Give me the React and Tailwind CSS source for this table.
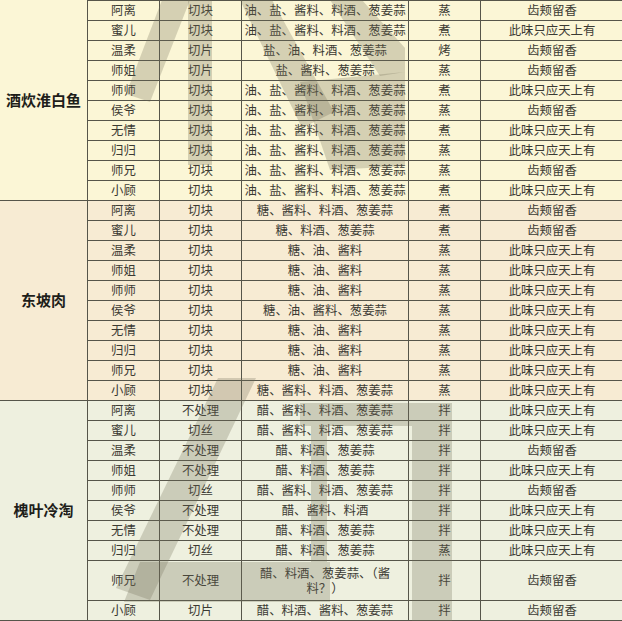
import React from "react";

const sections = [
  {
    name: "酒炊淮白鱼",
    bg: "bg-[#fbf6d6]",
    rows: [
      ["阿离", "切块", "油、盐、酱料、料酒、葱姜蒜", "蒸", "齿颊留香"],
      ["蜜儿", "切块", "油、盐、酱料、料酒、葱姜蒜", "煮", "此味只应天上有"],
      ["温柔", "切片", "盐、油、料酒、葱姜蒜", "烤", "齿颊留香"],
      ["师姐", "切片", "盐、酱料、葱姜蒜", "蒸", "齿颊留香"],
      ["师师", "切块", "油、盐、酱料、料酒、葱姜蒜", "煮", "此味只应天上有"],
      ["侯爷", "切块", "油、盐、酱料、料酒、葱姜蒜", "蒸", "齿颊留香"],
      ["无情", "切块", "油、盐、酱料、料酒、葱姜蒜", "煮", "此味只应天上有"],
      ["归归", "切块", "油、盐、酱料、料酒、葱姜蒜", "蒸", "此味只应天上有"],
      ["师兄", "切块", "油、盐、酱料、料酒、葱姜蒜", "蒸", "齿颊留香"],
      ["小顾", "切块", "油、盐、酱料、料酒、葱姜蒜", "煮", "此味只应天上有"],
    ],
  },
  {
    name: "东坡肉",
    bg: "bg-[#f7ebd3]",
    rows: [
      ["阿离", "切块", "糖、酱料、料酒、葱姜蒜", "煮", "齿颊留香"],
      ["蜜儿", "切块", "糖、料酒、葱姜蒜", "煮", "齿颊留香"],
      ["温柔", "切块", "糖、油、酱料", "蒸", "此味只应天上有"],
      ["师姐", "切块", "糖、油、酱料", "蒸", "此味只应天上有"],
      ["师师", "切块", "糖、油、酱料", "蒸", "此味只应天上有"],
      ["侯爷", "切块", "糖、油、酱料、葱姜蒜", "蒸", "此味只应天上有"],
      ["无情", "切块", "糖、油、酱料", "蒸", "此味只应天上有"],
      ["归归", "切块", "糖、油、酱料", "蒸", "此味只应天上有"],
      ["师兄", "切块", "糖、油、酱料", "蒸", "此味只应天上有"],
      ["小顾", "切块", "糖、酱料、料酒、葱姜蒜", "蒸", "此味只应天上有"],
    ],
  },
  {
    name: "槐叶冷淘",
    bg: "bg-[#eef0df]",
    rows: [
      ["阿离", "不处理", "醋、酱料、料酒、葱姜蒜", "拌", "此味只应天上有"],
      ["蜜儿", "切丝", "醋、酱料、料酒、葱姜蒜", "拌", "此味只应天上有"],
      ["温柔", "不处理", "醋、料酒、葱姜蒜", "拌", "齿颊留香"],
      ["师姐", "不处理", "醋、料酒、葱姜蒜", "拌", "此味只应天上有"],
      ["师师", "切丝", "醋、酱料、料酒、葱姜蒜", "拌", "齿颊留香"],
      ["侯爷", "不处理", "醋、酱料、料酒", "拌", "此味只应天上有"],
      ["无情", "不处理", "醋、料酒、葱姜蒜", "拌", "此味只应天上有"],
      ["归归", "切丝", "醋、料酒、葱姜蒜", "蒸", "此味只应天上有"],
      ["师兄", "不处理", "醋、料酒、葱姜蒜、（酱料？）", "拌", "齿颊留香", true],
      ["小顾", "切片", "醋、料酒、酱料、葱姜蒜", "拌", "齿颊留香"],
    ],
  },
];

const widths = ["w-[72px]", "w-[82px]", "w-[167px]", "w-[72px]", "w-[142px]"];

const Row = ({ row }) => (
  <div className={`flex border-b border-[#56554a] ${row[5] ? "h-[40px]" : "h-[20px]"}`}>
    {row.slice(0, 5).map((cell, i) => (
      <div
        key={i}
        className={`${widths[i]} shrink-0 flex items-center justify-center text-center leading-[15px] ${
          row[5] ? "px-[10px]" : "whitespace-nowrap"
        } ${i < 4 ? "border-r border-[#56554a]" : ""}`}
      >
        {cell}
      </div>
    ))}
  </div>
);

export default function App() {
  return (
    <div
      className="relative w-[622px] h-[621px] overflow-hidden bg-[#fbf6d6] text-[12.4px] text-[#3b3a33]"
      style={{ fontFamily: '"Noto Sans CJK SC", "Noto Sans", sans-serif' }}
    >
      {sections.map((s, si) => (
        <div key={s.name} className={`flex ${s.bg}`}>
          <div className="w-[88px] shrink-0 flex items-center justify-center border-r border-b border-[#56554a] text-[15px] font-bold text-[#1e1e1a]">
            {s.name}
          </div>
          <div className={`flex flex-col ${si === 0 ? "border-t border-[#56554a]" : ""}`}>
            {s.rows.map((r, ri) => (
              <Row key={ri} row={r} />
            ))}
          </div>
        </div>
      ))}

      {/* watermark */}
      <svg
        className="absolute inset-0 pointer-events-none"
        width="622"
        height="621"
        viewBox="0 0 622 621"
      >
        <g fill="#6e6c55" fillOpacity="0.27">
          <polygon points="162,0 190,0 150,102 126,94" />
          <rect x="188" y="0" width="24" height="165" />
          <polygon points="240,0 272,0 334,112 302,128" />
          <polygon points="300,82 405,72 405,166 330,170" />
          <polygon points="330,0 362,0 405,48 405,72 380,76" />
          <polygon points="218,378 256,378 150,600 116,588" />
          <polygon points="140,562 330,562 330,602 124,602" />
          <polygon points="300,403 452,403 452,621 412,621 412,426 300,426" />
          <rect x="311" y="426" width="16" height="136" />
        </g>
      </svg>
    </div>
  );
}
